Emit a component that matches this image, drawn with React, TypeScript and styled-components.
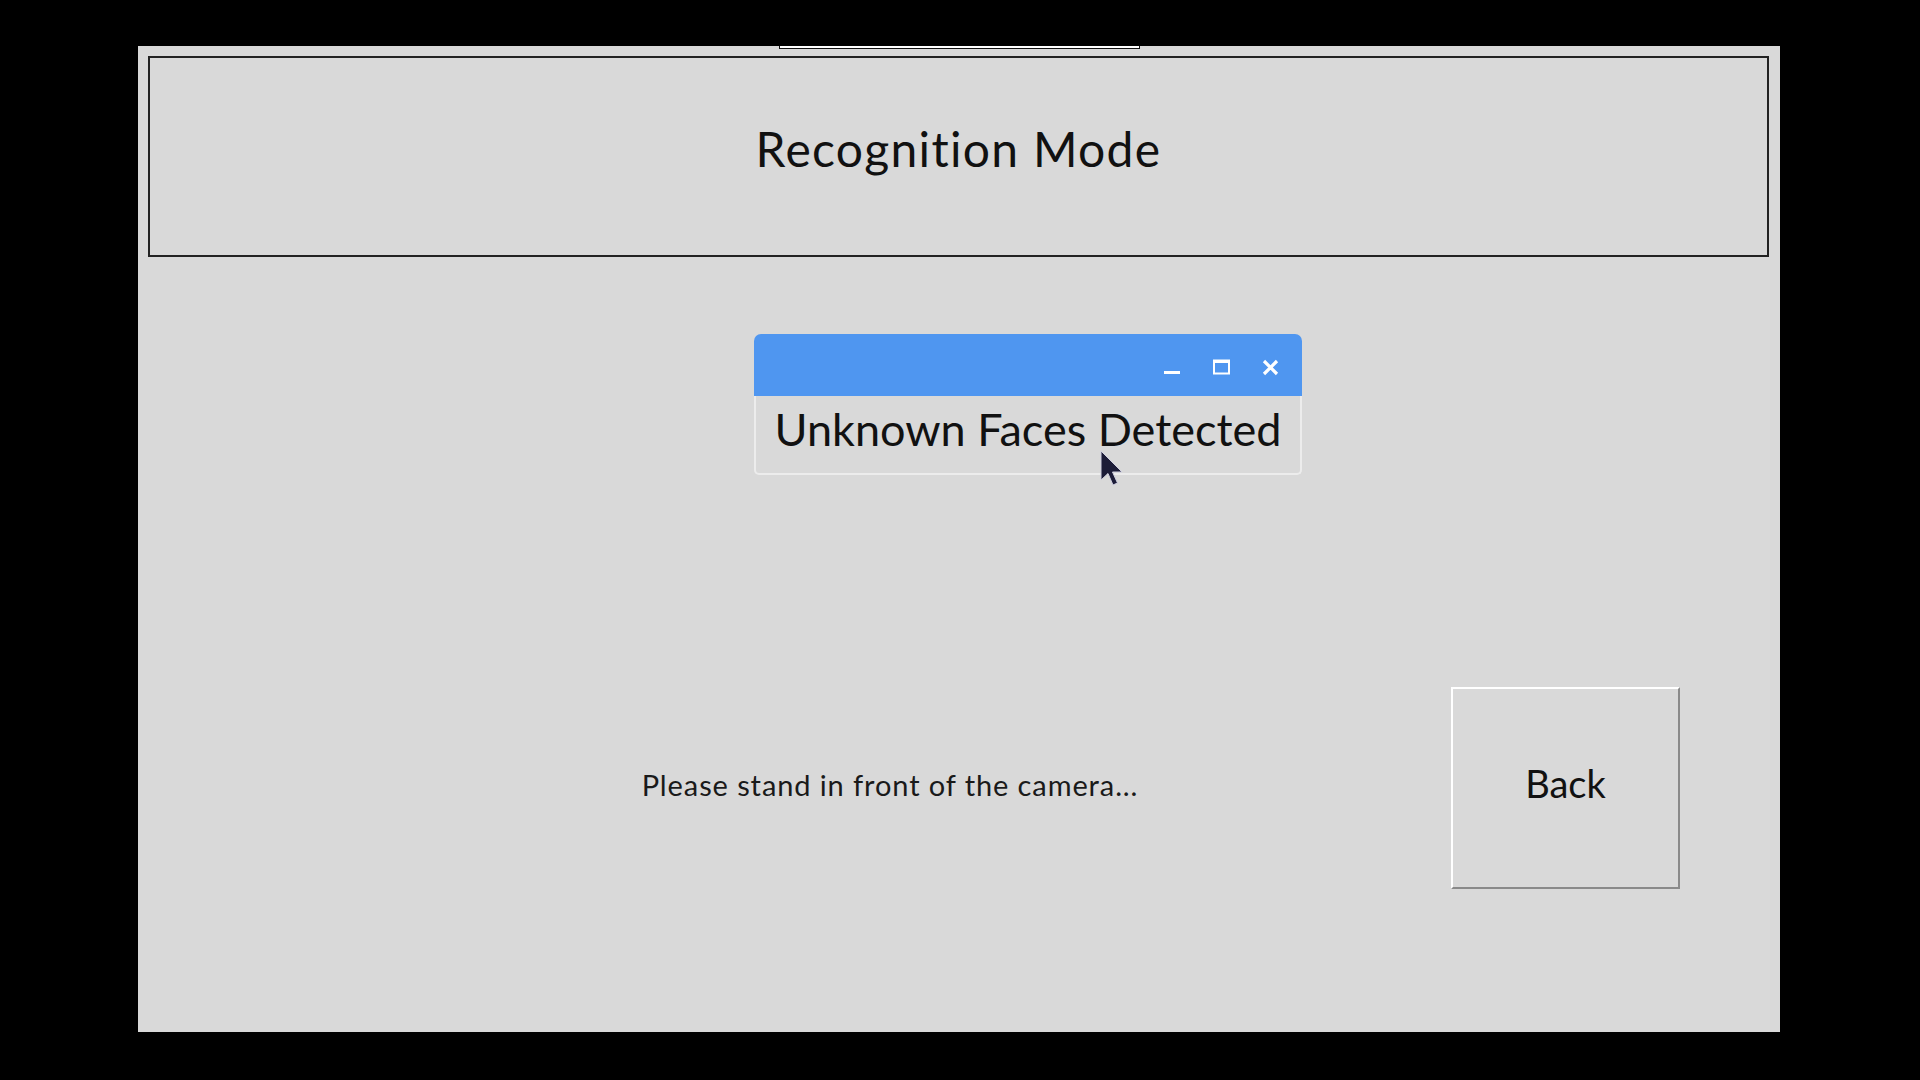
import { createGlobalStyle, styled } from "styled-components";

const GlobalStyle = createGlobalStyle`
  html, body {
    margin: 0;
    padding: 0;
    background: #000;
    font-family: Lato, "Open Sans", sans-serif;
    font-variant-ligatures: none;
  }
`;

const Screen = styled.div`
  width: 1920px;
  height: 1080px;
  background: #000;
  padding: 46px 0 0 138px;
  box-sizing: border-box;
`;

const Panel = styled.div`
  position: relative;
  width: 1642px;
  height: 986px;
  background: #d9d9d9;
  padding: 10px 11px 0 10px;
  box-sizing: border-box;
  display: flex;
  flex-direction: column;
`;

const OffscreenEdge = styled.div`
  position: absolute;
  top: 0;
  left: 641px;
  width: 361px;
  height: 3px;
  background: #fff;
  border: 1px solid #111;
  border-top: none;
  box-sizing: border-box;
`;

const Header = styled.div`
  height: 201px;
  border: 2px solid #222;
  box-sizing: border-box;
  display: flex;
  align-items: center;
  justify-content: center;
  padding-bottom: 16px;
`;

const Title = styled.h1`
  margin: 0;
  font-size: 48px;
  font-weight: 400;
  letter-spacing: 1.3px;
  color: #111;
`;

const StatusRow = styled.div`
  display: flex;
  align-items: center;
  margin-top: 430px;
  padding-left: 242px;
`;

const StatusText = styled.div`
  width: 1000px;
  text-align: center;
  font-size: 29px;
  letter-spacing: 0.9px;
  color: #1a1a1a;
  padding-bottom: 8px;
`;

const BackButton = styled.button`
  width: 229px;
  height: 202px;
  margin-left: 61px;
  background: #d9d9d9;
  border: 2px solid;
  border-color: #fff #8a8a8a #8a8a8a #fff;
  box-sizing: border-box;
  font-family: Lato, "Open Sans", sans-serif;
  font-size: 38px;
  color: #111;
  padding: 0 0 11px;
`;

const Popup = styled.div`
  position: absolute;
  left: 616px;
  top: 288px;
  width: 548px;
  display: flex;
  flex-direction: column;
`;

const TitleBar = styled.div`
  height: 62px;
  background: #4f96f0;
  border-radius: 7px 7px 0 0;
  display: flex;
  align-items: center;
  justify-content: flex-end;
  gap: 32px;
  padding: 5px 23px 0 0;
  box-sizing: border-box;
`;

const WinButton = styled.span`
  display: flex;
  align-items: center;
  justify-content: center;
  width: 17px;
  height: 17px;
`;

const PopupBody = styled.div`
  height: 79px;
  border: 2px solid #ececec;
  border-top: none;
  border-radius: 0 0 5px 5px;
  box-sizing: border-box;
  display: flex;
  justify-content: center;
  padding-top: 6px;
`;

const PopupText = styled.div`
  font-size: 45px;
  color: #111;
  line-height: 1.2;
`;

const Cursor = styled.svg`
  position: absolute;
  left: 962px;
  top: 404px;
`;

export default function App() {
  return (
    <>
      <GlobalStyle />
      <Screen>
        <Panel>
          <OffscreenEdge />
          <Header>
            <Title>Recognition Mode</Title>
          </Header>
          <StatusRow>
            <StatusText>Please stand in front of the camera...</StatusText>
            <BackButton>Back</BackButton>
          </StatusRow>

          <Popup>
            <TitleBar>
              <WinButton>
                <svg width="17" height="17" viewBox="0 0 17 17">
                  <rect x="0" y="12" width="16" height="3" fill="#fff" />
                </svg>
              </WinButton>
              <WinButton>
                <svg width="17" height="17" viewBox="0 0 17 17">
                  <rect x="1" y="1.5" width="15" height="13" fill="none" stroke="#fff" strokeWidth="2" />
                  <rect x="1" y="1" width="15" height="3" fill="#fff" />
                </svg>
              </WinButton>
              <WinButton>
                <svg width="17" height="17" viewBox="0 0 17 17">
                  <path d="M2 2 L15 15 M15 2 L2 15" stroke="#fff" strokeWidth="3.2" />
                </svg>
              </WinButton>
            </TitleBar>
            <PopupBody>
              <PopupText>Unknown Faces Detected</PopupText>
            </PopupBody>
          </Popup>

          <Cursor width="26" height="38" viewBox="0 0 26 38">
            <path
              d="M1 1 L1 30 L8 23.5 L13 35 L17.5 33 L12.5 22 L22 22 Z"
              fill="#1c1c38"
              stroke="#d0d0e0"
              strokeWidth="1"
              strokeLinejoin="round"
            />
          </Cursor>
        </Panel>
      </Screen>
    </>
  );
}
